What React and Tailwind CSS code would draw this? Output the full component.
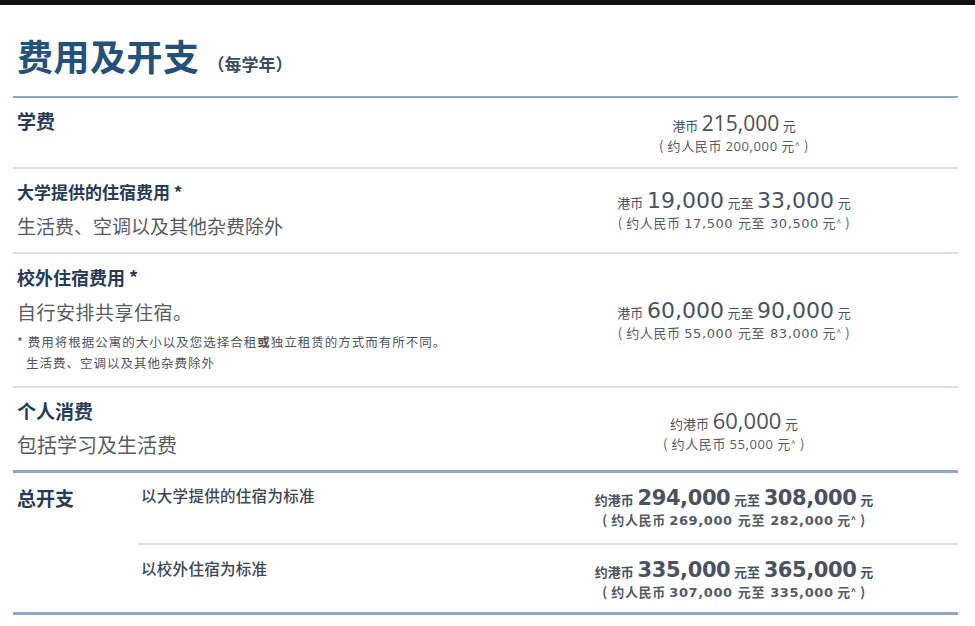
import React from 'react';

const cjk = { fontFamily: '"Noto Sans CJK SC", "Noto Sans", sans-serif' };
const open = { fontFamily: '"Open Sans", "Noto Sans CJK SC", sans-serif' };
const wide = { fontFamily: '"DejaVu Sans", "Noto Sans CJK SC", sans-serif' };

// one amount line: small prefix, big number(s), small suffix
const Amount = ({ prefix, from, to, bold, big = 'text-[21px]', font = open }) => (
    <div className={`leading-[24px] text-[#4a5262] whitespace-nowrap ${bold ? 'font-bold' : ''}`}>
        <span className="text-[13px]">{prefix}</span>{' '}
        <span style={font} className={`${big} ${bold ? 'font-bold tracking-[-0.4px]' : ''}`}>{from}</span>{' '}
        <span className="text-[13px]">{to ? '元至' : '元'}</span>
        {to && (
            <>
                {' '}
                <span style={font} className={`${big} ${bold ? 'font-bold tracking-[-0.4px]' : ''}`}>{to}</span>{' '}
                <span className="text-[13px]">元</span>
            </>
        )}
    </div>
);

const Rmb = ({ children, bold, size = 'text-[13px]', font = open }) => (
    <div className={`${size} leading-[16px] text-[#555b66] tracking-[0.6px] whitespace-nowrap ${bold ? 'font-bold' : ''}`}>
        (&nbsp;约人民币 <span style={font}>{children}</span> 元<span className="text-[9px] align-top">^</span>&nbsp;)
    </div>
);

const App = () => {
    return (
        <div style={cjk} className="w-[975px] h-[626px] bg-white overflow-hidden">
            {/* top dark strip */}
            <div className="h-[5px] bg-[#111]" />

            <div className="ml-[13px] mr-[17px]">
                {/* Title */}
                <div className="pt-[30px] pb-[19px] pl-[4px] flex items-baseline gap-[8px]">
                    <h1 className="text-[36px] leading-[40px] font-bold text-[#245079] tracking-[0.5px]">费用及开支</h1>
                    <span className="text-[17px] font-bold text-[#3a4d63]">（每学年）</span>
                </div>

                {/* Tuition */}
                <div className="h-[71px] border-t-2 border-[#8fa6bd] flex">
                    <div className="flex-1 pl-[4px] pt-[11px]">
                        <div className="text-[19px] leading-[24px] font-bold text-[#263b55]">学费</div>
                    </div>
                    <div className="w-[448px] text-center pt-[13px]">
                        <Amount prefix="港币" from="215,000" />
                        <Rmb>200,000</Rmb>
                    </div>
                </div>

                {/* University housing */}
                <div className="h-[85px] border-t-2 border-[#dcdfe3] flex">
                    <div className="flex-1 pl-[4px] pt-[11px]">
                        <div className="text-[17px] leading-[24px] font-bold text-[#263b55]">大学提供的住宿费用 *</div>
                        <div className="mt-[9px] text-[19px] leading-[26px] text-[#575c63]">生活费、空调以及其他杂费除外</div>
                    </div>
                    <div className="w-[448px] text-center pt-[20px]">
                        <Amount prefix="港币" from="19,000" to="33,000" big="text-[22px]" font={wide} />
                        <Rmb font={wide}>17,500 元至 30,500</Rmb>
                    </div>
                </div>

                {/* Off-campus housing */}
                <div className="h-[134px] border-t-2 border-[#dcdfe3] flex">
                    <div className="flex-1 pl-[4px] pt-[11px]">
                        <div className="text-[18px] leading-[24px] font-bold text-[#263b55]">校外住宿费用 *</div>
                        <div className="mt-[10px] text-[19px] leading-[26px] text-[#575c63] tracking-[0.5px]">自行安排共享住宿。</div>
                        <div className="mt-[6px] text-[12.5px] leading-[21px] text-[#4f545b] tracking-[1px]">
                            <div>* 费用将根据公寓的大小以及您选择合租<b>或</b>独立租赁的方式而有所不同。</div>
                            <div className="pl-[9px]">生活费、空调以及其他杂费除外</div>
                        </div>
                    </div>
                    <div className="w-[448px] text-center pt-[45px]">
                        <Amount prefix="港币" from="60,000" to="90,000" big="text-[22px]" font={wide} />
                        <Rmb font={wide}>55,000 元至 83,000</Rmb>
                    </div>
                </div>

                {/* Personal expenses */}
                <div className="h-[84px] border-t-2 border-[#dcdfe3] flex">
                    <div className="flex-1 pl-[4px] pt-[11px]">
                        <div className="text-[19px] leading-[24px] font-bold text-[#263b55]">个人消费</div>
                        <div className="mt-[9px] text-[20px] leading-[26px] text-[#575c63]">包括学习及生活费</div>
                    </div>
                    <div className="w-[448px] text-center pt-[20px]">
                        <Amount prefix="约港币" from="60,000" big="text-[22px]" />
                        <Rmb>55,000</Rmb>
                    </div>
                </div>

                {/* Total */}
                <div className="border-t-[3px] border-b-[3px] border-[#8fa6bd] flex">
                    <div className="w-[125px] pl-[4px] pt-[12px]">
                        <div className="text-[19px] leading-[26px] font-bold text-[#263b55]">总开支</div>
                    </div>
                    <div className="flex-1">
                        <div className="h-[72px] border-b-2 border-[#dcdfe3] flex">
                            <div className="flex-1 pl-[3px] pt-[11px] text-[15.5px] leading-[22px] font-medium text-[#3c4654] tracking-[0.3px]">
                                以大学提供的住宿为标准
                            </div>
                            <div className="w-[448px] text-center pt-[13px]">
                                <Amount prefix="约港币" from="294,000" to="308,000" bold big="text-[21px]" font={wide} />
                                <Rmb bold font={wide}>269,000 元至 282,000</Rmb>
                            </div>
                        </div>
                        <div className="h-[67px] flex">
                            <div className="flex-1 pl-[3px] pt-[12px] text-[15.5px] leading-[22px] font-medium text-[#3c4654] tracking-[0.3px]">
                                以校外住宿为标准
                            </div>
                            <div className="w-[448px] text-center pt-[13px]">
                                <Amount prefix="约港币" from="335,000" to="365,000" bold big="text-[21px]" font={wide} />
                                <Rmb bold font={wide}>307,000 元至 335,000</Rmb>
                            </div>
                        </div>
                    </div>
                </div>
            </div>
        </div>
    );
};

export default App;
